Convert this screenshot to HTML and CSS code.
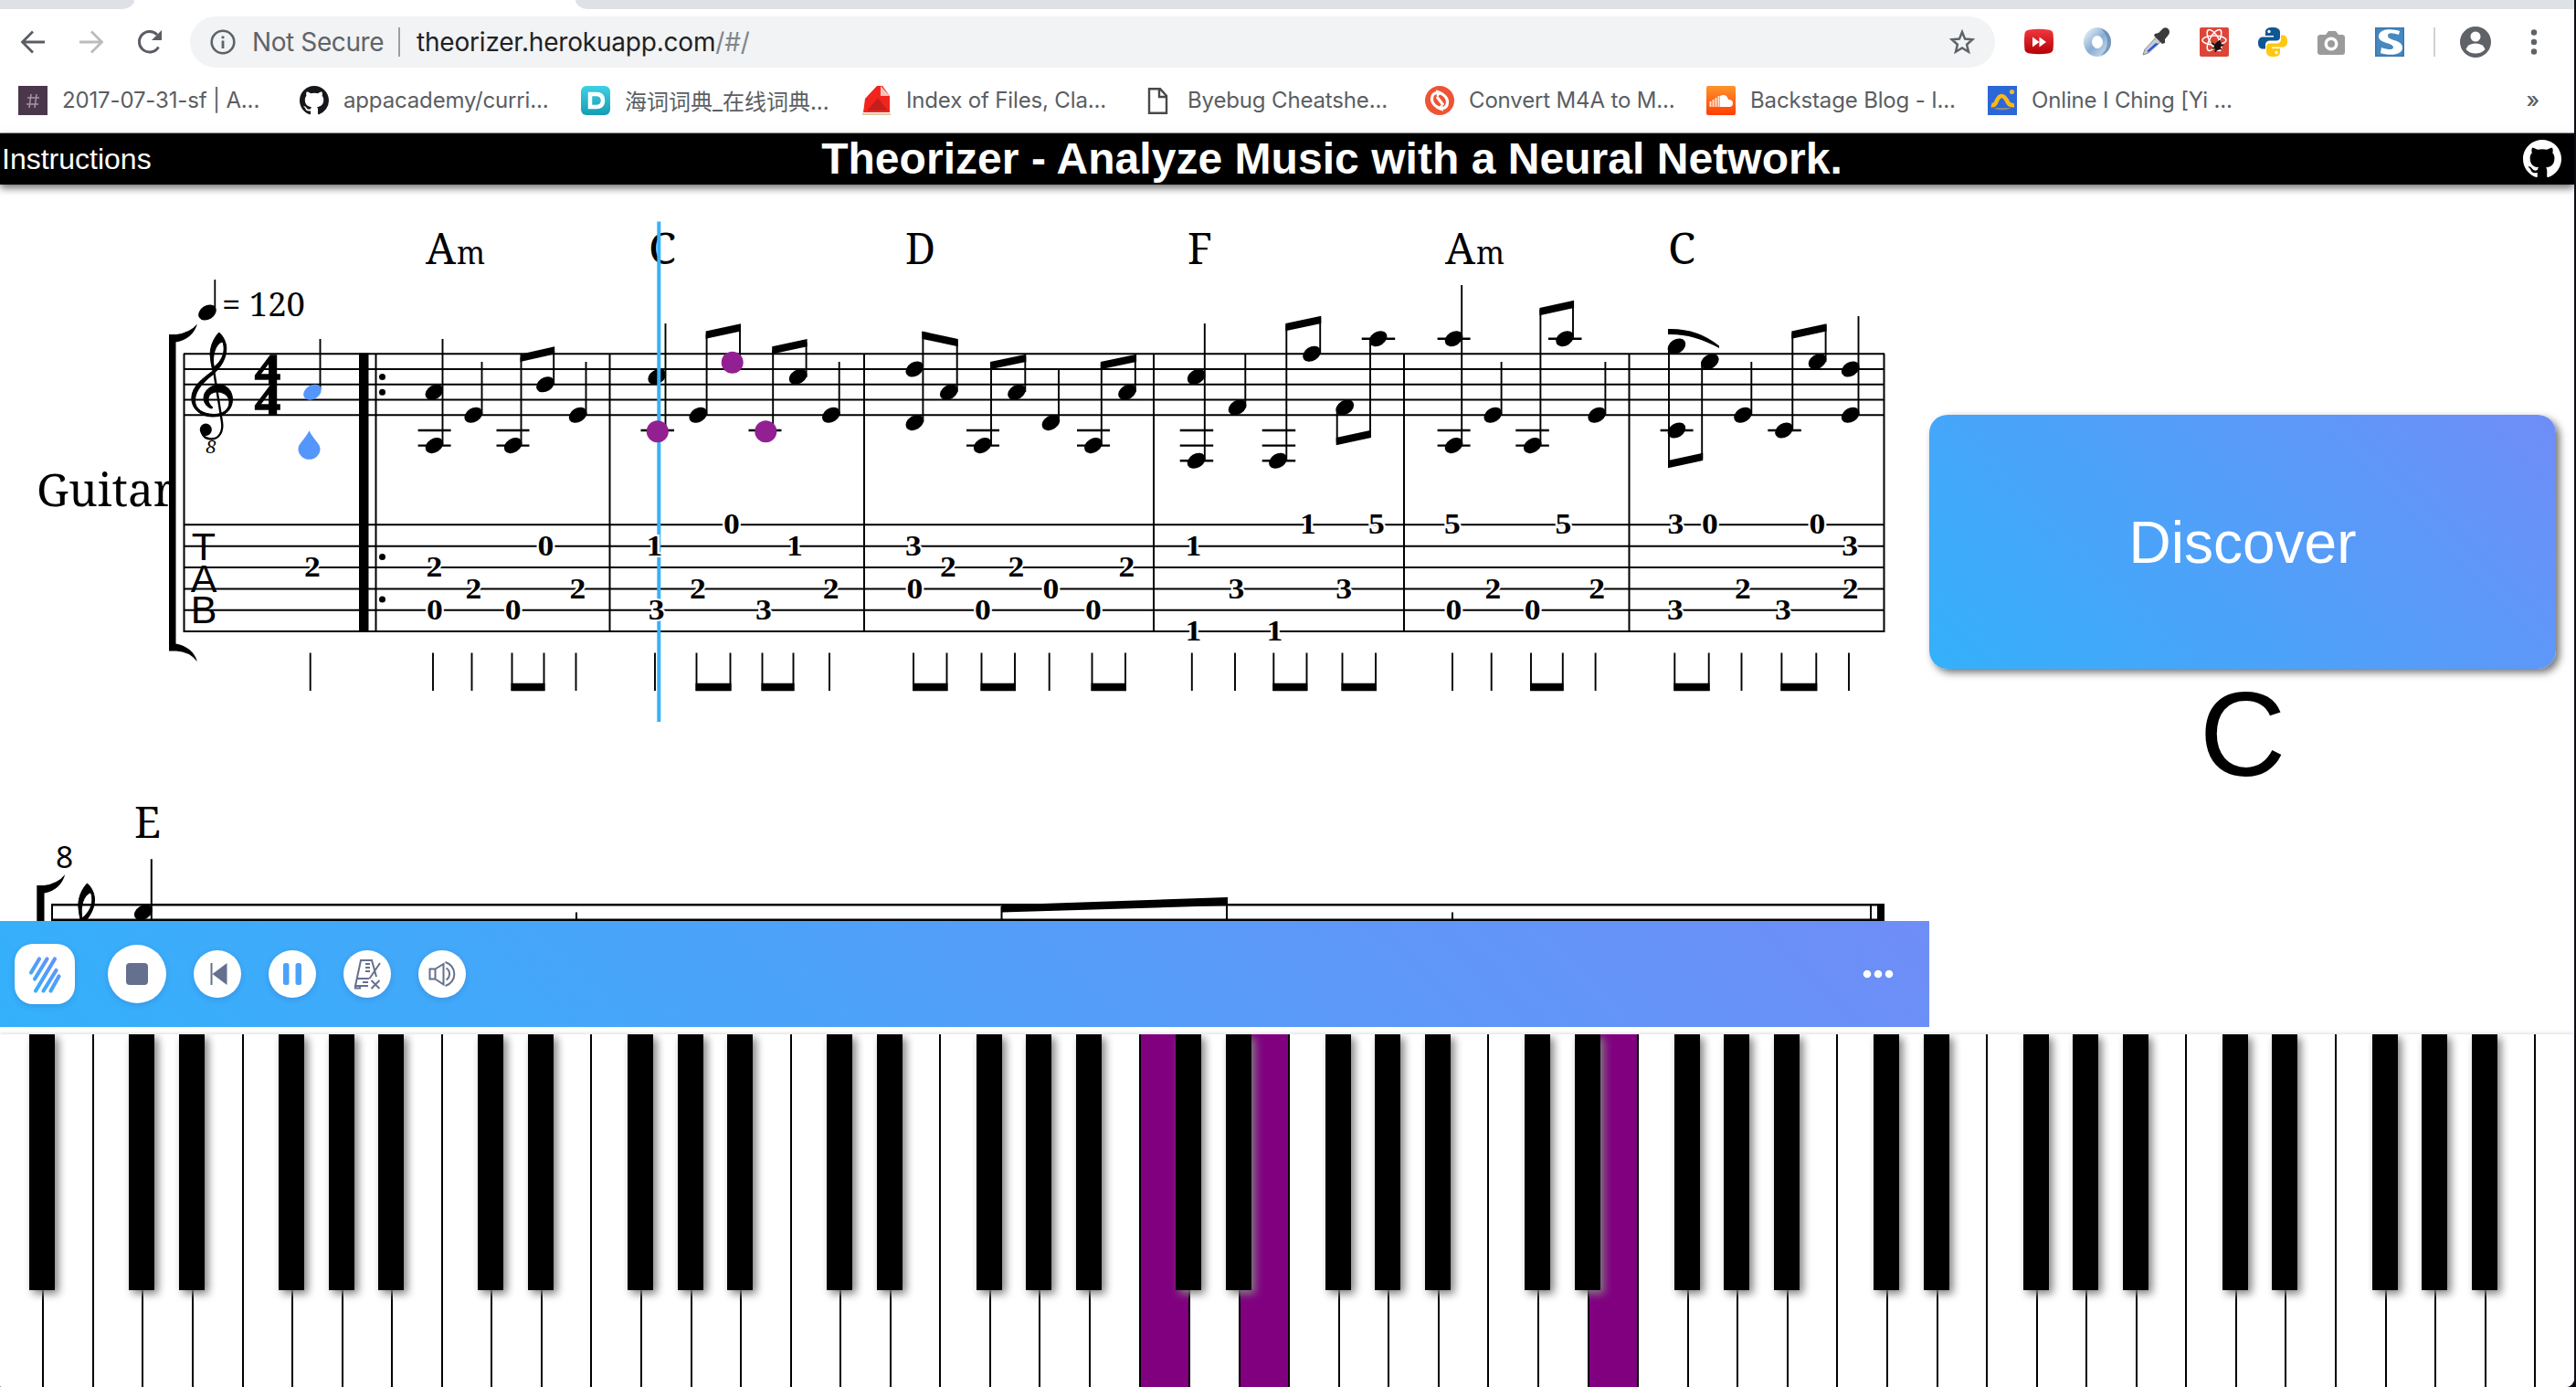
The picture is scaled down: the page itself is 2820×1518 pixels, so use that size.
FILE: index.html
```html
<!DOCTYPE html>
<html lang="en">
<head>
<meta charset="utf-8">
<title>Theorizer</title>
<link rel="stylesheet" href="styles.css">
</head>
<body>
<svg class="defs" aria-hidden="true">
  <defs>
    <symbol id="github" viewBox="0 0 16 16"><path d="M8 0C3.58 0 0 3.58 0 8c0 3.54 2.29 6.53 5.47 7.59.4.07.55-.17.55-.38 0-.19-.01-.82-.01-1.49-2.01.37-2.53-.49-2.69-.94-.09-.23-.48-.94-.82-1.13-.28-.15-.68-.52-.01-.53.63-.01 1.08.58 1.23.82.72 1.21 1.87.87 2.33.66.07-.52.28-.87.51-1.07-1.78-.2-3.64-.89-3.64-3.95 0-.87.31-1.59.82-2.15-.08-.2-.36-1.02.08-2.12 0 0 .67-.21 2.2.82.64-.18 1.32-.27 2-.27s1.36.09 2 .27c1.53-1.04 2.2-.82 2.2-.82.44 1.1.16 1.92.08 2.12.51.56.82 1.27.82 2.15 0 3.07-1.87 3.75-3.65 3.95.29.25.54.73.54 1.48 0 1.07-.01 1.93-.01 2.2 0 .21.15.46.55.38A8.01 8.01 0 0 0 16 8c0-4.42-3.58-8-8-8z"/></symbol>
  </defs>
</svg>
<div class="window">
  <div class="tabs"><span class="tab-left"></span><span class="tab-right"></span></div>
  <div class="toolbar">
    <nav class="nav">
      <svg viewBox="0 0 28 28"><path d="M27 14H3M14 2.500 2.500 14 14 25.500" fill="none" stroke="#5a5e63" stroke-width="2.800"/></svg>
      <svg viewBox="0 0 28 28"><path d="M1 14h24M14 2.500 25.500 14 14 25.500" fill="none" stroke="#babcbe" stroke-width="2.800"/></svg>
      <svg viewBox="0 0 28 28"><path d="M23.500 19.500A11.300 11.300 0 1 1 22 6" fill="none" stroke="#5a5e63" stroke-width="3"/><path d="M27 1v11H16z" fill="#5a5e63"/></svg>
    </nav>
    <div class="omnibox">
      <svg class="info" viewBox="0 0 28 28"><circle cx="14" cy="14" r="12.300" fill="none" stroke="#5f6368" stroke-width="2.600"/><path d="M12.600 12.500h2.800V21h-2.800zM12.600 7.500h2.800v2.800h-2.800z" fill="#5f6368"/></svg>
      <span class="insecure">Not Secure</span>
      <span class="url">theorizer.herokuapp.com<span class="path">/#/</span></span>
      <svg class="star" viewBox="0 0 28 28"><path d="m14 3 3.100 7.600 8.200.7-6.200 5.400 1.900 8L14 20.400l-7 4.300 1.900-8-6.200-5.400 8.200-.7z" fill="none" stroke="#5f6368" stroke-width="2.500"/></svg>
    </div>
    <div class="extensions">
      <svg viewBox="0 0 32 32"><defs><linearGradient id="rd" x2="0" y2="1"><stop stop-color="#f0383d"/><stop offset="1" stop-color="#b50008"/></linearGradient></defs><path d="M6 2.500q10-1.500 20 0 5 .5 5.500 4 1 8.500 0 18-.5 3-5.500 4-10 1.500-20 0-5-.8-5.500-4-1-9 0-18 .5-3.500 5.500-4z" fill="url(#rd)"/><path d="m9 10.500 7.500 5.500L9 21.500zm7.500 0L24 16l-7.500 5.500z" fill="#fff"/></svg>
      <svg viewBox="0 0 32 32"><defs><linearGradient id="rg" x2="1" y2="1"><stop stop-color="#d9e5f2"/><stop offset=".5" stop-color="#88add3"/><stop offset="1" stop-color="#c7d9eb"/></linearGradient></defs><ellipse cx="16" cy="16" rx="10.500" ry="11.500" fill="none" stroke="url(#rg)" stroke-width="9"/><path d="M20 1.500a15 15 0 0 1 0 29q7-6 7-14.500T20 1.500z" fill="#5c82ad" opacity=".7"/></svg>
      <svg viewBox="0 0 32 32"><path d="M2 30 4 24 18 9l5 5L8 28z" fill="#c8ccd2" stroke="#888" stroke-width="1"/><path d="m6 26 10-9 3 1L8 27z" fill="#2c55e0"/><path d="m15 7 4-1 5-5q4-2 6 1t0 6l-4 5 0 4-3 1-9-9z" fill="#3b3b3d"/></svg>
      <svg viewBox="0 0 32 32"><rect width="32" height="32" rx="2" fill="#dc4638"/><g fill="none" stroke="#fff" stroke-width="1.500"><ellipse cx="16" cy="14" rx="13" ry="5"/><ellipse cx="16" cy="14" rx="13" ry="5" transform="rotate(60 16 14)"/><ellipse cx="16" cy="14" rx="13" ry="5" transform="rotate(120 16 14)"/></g><ellipse cx="20" cy="20" rx="3.500" ry="5.500" transform="rotate(25 20 20)" fill="#1c1010"/><path d="m13 17 11 7M14 23l12-4M17 27l5-13" stroke="#1c1010" stroke-width="1.800"/></svg>
      <svg viewBox="0 0 32 32"><path d="M16 0c-6 0-8 2-8 5v4h9v1.500H5C2 10.500 0 13 0 17s2 6.500 5 6.500h3V19c0-3 2-4.500 5-4.500h7c3 0 4-2 4-4V5c0-3-3-5-8-5z" fill="#0d5794"/><path d="M16 32c6 0 8-2 8-5v-4h-9v-1.500h12c3 0 5-2.500 5-6.500s-2-6.500-5-6.500h-2V13c0 3-2 4.500-5 4.500h-7c-3 0-4 2-4 4V27c0 3 3 5 7 5z" fill="#ffc80f"/><circle cx="12" cy="4.500" r="1.700" fill="#fff"/><circle cx="20" cy="27.500" r="1.700" fill="#fff"/></svg>
      <svg viewBox="0 0 32 32"><path d="M4 8h6l3-4h8l3 4h4q3 0 3 3v16q0 3-3 3H4q-3 0-3-3V11q0-3 3-3z" fill="#9b9b9b"/><circle cx="16" cy="18" r="7.500" fill="#fff"/><circle cx="16" cy="18" r="4" fill="#9b9b9b"/></svg>
      <svg viewBox="0 0 32 32"><rect width="32" height="32" fill="#3a76ad"/><rect x="1.500" y="1.500" width="29" height="29" fill="#4589c0"/><path d="M27 4 26 8Q14 4 14 9c0 6 17 4 16 14-1 8-16 8-24 5l1-6q12 4 13 0C20 16 3 18 4 9 5 1 19 1 27 4z" fill="#fff"/></svg>
    </div>
    <span class="divider"></span>
    <svg class="avatar" viewBox="0 0 34 34"><circle cx="17" cy="17" r="17" fill="#5f6368"/><circle cx="17" cy="11" r="5.500" fill="#fff"/><path d="M6.500 25q2-6.500 10.500-6.500T27.500 25Q23.500 29.500 17 29.500T6.500 25z" fill="#fff"/></svg>
    <svg class="more" viewBox="0 0 8 28"><g fill="#5f6368"><circle cx="4" cy="3.500" r="3.200"/><circle cx="4" cy="14" r="3.200"/><circle cx="4" cy="24.500" r="3.200"/></g></svg>
  </div>
  <div class="bookmarks">
    <a><svg viewBox="0 0 32 32"><rect width="32" height="32" fill="#4b374b"/><path d="m14 9-2 15M20 9l-2 15M10 13h13M9 20h13" stroke="#a595a5" stroke-width="1.500"/></svg><span>2017-07-31-sf | A...</span></a>
    <a><svg class="ink"><use href="#github"/></svg><span>appacademy/curri...</span></a>
    <a><svg viewBox="0 0 32 32"><defs><linearGradient id="dc" x2="0" y2="1"><stop stop-color="#3fd0e4"/><stop offset="1" stop-color="#149db3"/></linearGradient></defs><rect width="32" height="32" rx="6" fill="url(#dc)"/><path d="M10 9h6.500q7.500 0 7.500 7t-7.500 7H10z" fill="none" stroke="#fff" stroke-width="4.500"/></svg><span class="cjk">海词词典_在线词典...</span></a>
    <a><svg viewBox="0 0 32 32"><path d="M1 29 3 14 16 0h6l8 11v18z" fill="#f3241e"/><path d="M5 27 17 13l11 14z" fill="#c4201b"/><path d="m20 0 10 11H20z" fill="#f9c5bd"/><path d="M0 30h31v2H0z" fill="#d9cda5"/></svg><span>Index of Files, Cla...</span></a>
    <a><svg viewBox="0 0 32 32"><path d="M6 3.200h12L25 11v18.800H6zM17 3v9h8" fill="none" stroke="#47494c" stroke-width="2.400"/></svg><span>Byebug Cheatshe...</span></a>
    <a><svg viewBox="0 0 32 32"><circle cx="16" cy="16" r="16" fill="#ee5434"/><g fill="none" stroke="#fff" stroke-width="3.200"><path d="M18 25.500 13 23Q7 19 7.500 13.500T13 7.500"/><path d="M14 6.500 19 9q6 4 5.500 9.500T19 24.500"/></g><path d="m12 4 6 4-5 4.500zM20 28l-6-4 5-4.500z" fill="#fff"/><path d="m13 12 7 9" stroke="#fff" stroke-width="3"/></svg><span>Convert M4A to M...</span></a>
    <a><svg viewBox="0 0 32 32"><defs><linearGradient id="sc" x2="0" y2="1"><stop stop-color="#fd942c"/><stop offset="1" stop-color="#ff3d05"/></linearGradient></defs><rect width="32" height="32" rx="2" fill="url(#sc)"/><path d="M15 23V11q7-3 9 4 5 0 5 4t-4 4z" fill="#fff"/><path d="M4.500 17v6M7.500 15v8M10.500 13v10M13.500 11v12" stroke="#ffe3d0" stroke-width="2"/></svg><span>Backstage Blog - I...</span></a>
    <a><svg viewBox="0 0 32 32"><rect width="32" height="32" fill="#2c67d8"/><path d="M4 21q4 1 6-5 5-10 11 0 2 6 8 5" fill="none" stroke="#fdb813" stroke-width="4.500"/><path d="M6 24h20q-10 5-20 0z" fill="#8a8d88"/><circle cx="26.500" cy="6.500" r="2.600" fill="#e8b640"/></svg><span>Online I Ching [Yi ...</span></a>
    <b class="overflow">»</b>
  </div>
  <header class="header">
    <a class="instructions">Instructions</a>
    <h1>Theorizer - Analyze Music with a Neural Network.</h1>
    <svg class="gh"><use href="#github"/></svg>
  </header>
  <main class="main">
    <section class="score">
      <svg class="sheet" viewBox="0 202 2112 806">
        <defs>
          <ellipse id="h" rx="10.600" ry="7.600" transform="rotate(-32)"/>
          <g id="clef"><path stroke="#000" stroke-width="1" fill-rule="evenodd" d="M239.700 364C232 372 229 384 230.500 392c.5 6 1.500 10 2.500 14C222 414 209.800 423 209.800 436c0 12 10.200 20 23.200 20 14 0 21.500-8 21.500-19 0-10-7.500-16.500-14.800-16-9.700.5-16.700 7-16.700 15 0 5 4 10 8.500 11l1.500-1c-3.500-3-5-6-5-8.500 0-6.500 6-9 11-8.500 6.500.5 12 5 12 11 0 9-8 13.500-17 13.500-12-.5-20.500-5.500-20.500-15.500C213.500 427 224 417 233 410c10-9 15-19 14.800-29-.3-8-4.800-14.500-8.100-17zm3.300 10c-7 3-11 14-9 28 8-6 12-15 11-23-.3-3-1-4.500-2-5z"/><path d="M232.500 396 243 462c1.500 10-3 18.500-11.500 18.500-5 0-9-2.500-10.500-7" fill="none" stroke="#000" stroke-width="2.400"/><ellipse cx="225.300" cy="470.300" rx="6.500" ry="6.800"/></g>
        </defs>

        <!-- system lines and barlines -->
        <g fill="none" stroke="#000" stroke-width="2">
          <path d="M201 387.300H2063M201 404H2063M201 420.800H2063M201 437.600H2063M201 454.300H2063M201 574.300H2063M201 597.700H2063M201 621H2063M201 644.400H2063M201 667.800H2063M201 691H2063"/>
          <path d="M201.500 387V692M411.500 387V692M667.500 387V692M946 387V692M1263 387V692M1537 387V692M1783.500 387V692M2062.500 387V692"/>
        </g>
        <path d="M393 386.500h10.500V692H393z"/>
        <g><circle cx="418.500" cy="412.500" r="3.500"/><circle cx="418.500" cy="429.300" r="3.500"/><circle cx="418.500" cy="609.400" r="3.500"/><circle cx="418.500" cy="656" r="3.500"/></g>
        <text class="serif" x="40" y="553.500" font-size="49" textLength="151" lengthAdjust="spacingAndGlyphs">Guitar</text>
        <path d="M185 366h8q15-2 23-11.500-5 16.500-23.500 20V704.500Q211 708 216 724q-9-11-23-11.500h-8z"/>
        <use href="#clef"/>
        <text class="serif it" x="231" y="496" font-size="20" text-anchor="middle">8</text>
        <use href="#h" x="227" y="342"/><path d="M235.300 306v35" stroke="#000" stroke-width="1.800"/>
        <text class="serif" x="243" y="346" font-size="37" textLength="91" lengthAdjust="spacingAndGlyphs">= 120</text>
        <g class="time"><text x="279" y="420.500" textLength="28" lengthAdjust="spacingAndGlyphs">4</text><text x="279" y="454" textLength="28" lengthAdjust="spacingAndGlyphs">4</text></g>
        <g class="tab-clef"><text x="223" y="613">T</text><text x="223" y="647.500">A</text><text x="223" y="682">B</text></g>

        <!-- chord names -->
        <g class="serif chord">
          <text x="466" y="288.600" textLength="33" lengthAdjust="spacingAndGlyphs">A</text><text class="minor" x="500" y="288.600" textLength="31" lengthAdjust="spacingAndGlyphs">m</text>
          <text x="710" y="288.600" textLength="30" lengthAdjust="spacingAndGlyphs">C</text>
          <text x="991" y="288.600" textLength="33" lengthAdjust="spacingAndGlyphs">D</text>
          <text x="1300" y="288.600" textLength="27" lengthAdjust="spacingAndGlyphs">F</text>
          <text x="1582" y="288.600" textLength="33" lengthAdjust="spacingAndGlyphs">A</text><text class="minor" x="1616" y="288.600" textLength="31" lengthAdjust="spacingAndGlyphs">m</text>
          <text x="1826" y="288.600" textLength="30" lengthAdjust="spacingAndGlyphs">C</text>
          <text x="147" y="917" textLength="29" lengthAdjust="spacingAndGlyphs">E</text>
        </g>

        <!-- note stems -->
        <path fill="none" stroke="#000" stroke-width="1.900" d="M350.500 371v55M484.500 371v116M527.500 396v58M570.500 391v96M606.200 384v37M641.500 396v58M728.500 354v112M773.600 366v88M810 358v38M846.200 383v86M882.600 375v38M918.700 396v58M1010.400 363v99M1047.700 372v57M1085 398v90M1122.300 390v39M1159 405v57M1205.800 398v90M1242.800 390v39M1318.800 354v150M1363.300 388v58M1408.300 356v148M1445.200 348v39M1463.700 446v38M1500 371v107M1600.200 312v176M1643.600 396v58M1686.400 339v149M1722 331v40M1757.400 396v58M1827 379v130M1863.200 396v106M1917.300 396v58M1962.300 365v106M1998.600 356v40M2034.500 346v108"/>
        <!-- beams -->
        <path d="M569.500 387.800 607.200 379.300v8.300l-37.700 8.300zM772.600 362.500 811 354.200v8.300l-38.400 8.300zM845.200 379.300 883.600 371v8.300l-38.400 8.300zM1009.400 362.500l39.300 8.400v8.300l-39.300-8.300zM1084 396l39.300-8.300v8.300L1084 404.300zM1204.800 396l39.300-8.300v8.300l-39.300 8.300zM1407.300 354l39-8.300v8.300l-39 8.300zM1462.700 479l38.300-8.300v8.300l-38.300 8.300zM1685.400 337l37.700-8.300v8.300l-37.700 8.300zM1826 504l38.200-8.300v8.300l-38.200 8.300zM1961.300 362.500l38.300-8.300v8.300l-38.300 8.300z"/>
        <path d="M1826 360q32-1 56 18.500v2.500q-29-16-56-15z"/>
        <!-- ledger lines -->
        <path fill="none" stroke="#000" stroke-width="2.400" d="M457.600 471h36M457.600 487.600h36M543.500 471h36M543.500 487.600h36M701.500 471h36.500M819.500 471h36M1058 471h36M1058 487.600h36M1179 471h36M1179 487.600h36M1291.700 471h36.500M1291.700 487.600h36.500M1291.700 504.300h36.500M1381.700 471h36.500M1381.700 487.600h36.500M1381.700 504.300h36.500M1490.700 370.700h36.500M1573.600 370.700h36M1573.600 471h36M1573.600 487.600h36M1659.300 471h36.500M1659.300 487.600h36.500M1695 370.700h36.500M1817.600 471h36M1935.300 471h36.500"/>
        <!-- note heads -->
        <g>
          <use href="#h" x="342" y="429.200" fill="#5596fc"/>
          <use href="#h" x="475.400" y="429.200"/><use href="#h" x="475.400" y="487.600"/><use href="#h" x="518.300" y="454.300"/><use href="#h" x="561.600" y="487.600"/><use href="#h" x="597" y="420.800"/><use href="#h" x="632.600" y="454.300"/>
          <use href="#h" x="719.200" y="412.400"/><use href="#h" x="764.300" y="454.300"/><use href="#h" x="873.600" y="412.400"/><use href="#h" x="909.800" y="454.300"/>
          <use href="#h" x="1001.300" y="404"/><use href="#h" x="1001.300" y="462.600"/><use href="#h" x="1038.800" y="429.200"/><use href="#h" x="1075.600" y="487.600"/><use href="#h" x="1113" y="429.200"/><use href="#h" x="1150.400" y="462.600"/><use href="#h" x="1196.800" y="487.600"/><use href="#h" x="1234" y="429.200"/>
          <use href="#h" x="1309.600" y="412.400"/><use href="#h" x="1309.600" y="504.300"/><use href="#h" x="1354.600" y="445.900"/><use href="#h" x="1399" y="504.300"/><use href="#h" x="1436" y="387.300"/><use href="#h" x="1472.300" y="445.900"/><use href="#h" x="1508.600" y="370.700"/>
          <use href="#h" x="1591.500" y="370.700"/><use href="#h" x="1591.500" y="487.600"/><use href="#h" x="1634.300" y="454.300"/><use href="#h" x="1677.700" y="487.600"/><use href="#h" x="1713" y="370.700"/><use href="#h" x="1748.200" y="454.300"/>
          <use href="#h" x="1835.500" y="379"/><use href="#h" x="1835.500" y="471"/><use href="#h" x="1871.800" y="395.700"/><use href="#h" x="1908" y="454.300"/><use href="#h" x="1953" y="471"/><use href="#h" x="1989.500" y="395.700"/><use href="#h" x="2025.700" y="404"/><use href="#h" x="2025.700" y="454.300"/>
        </g>
        <path d="M338.500 471.300c4 9 12 14 12 20a12 11.500 0 0 1-24 0c0-6 8-11 12-20z" fill="#5596fc"/>

        <!-- rhythm stems under the tablature -->
        <path fill="none" stroke="#000" stroke-width="1.900" d="M339.700 714.500V756M474 714.500V756M516.500 714.500V756M560.500 714.500V756M595.500 714.500V756M630.500 714.500V756M717 714.500V756M762.500 714.500V756M799.500 714.500V756M834.500 714.500V756M868.500 714.500V756M908 714.500V756M1000 714.500V756M1036.500 714.500V756M1074.500 714.500V756M1111 714.500V756M1148.700 714.500V756M1195.500 714.500V756M1232 714.500V756M1304.800 714.500V756M1352 714.500V756M1394.300 714.500V756M1430.500 714.500V756M1469.500 714.500V756M1506 714.500V756M1590 714.500V756M1632.700 714.500V756M1676 714.500V756M1710.800 714.500V756M1746.600 714.500V756M1833.300 714.500V756M1870.700 714.500V756M1906.500 714.500V756M1950.400 714.500V756M1988.300 714.500V756M2024 714.500V756"/>
        <path fill="none" stroke="#000" stroke-width="8.400" d="M559.500 752h37M761.500 752h39M833.500 752h36M999 752h38.500M1073.500 752h38.500M1194.500 752h38.500M1393.300 752h38M1468.500 752h38.500M1675 752h36.500M1832.300 752h39.300M1949.400 752h39.900"/>

        <!-- playback cursor -->
        <path d="M721.300 242.500V790" stroke="#38b1f8" stroke-width="4"/>
        <g fill="#932092"><circle cx="719.800" cy="472.300" r="12"/><circle cx="801.700" cy="396.700" r="12"/><circle cx="838.300" cy="472.300" r="12"/></g>

        <!-- fret numbers -->
        <g class="frets">
          <text x="801" y="584.500">0</text><text x="1432" y="584.500">1</text><text x="1507" y="584.500">5</text><text x="1590" y="584.500">5</text><text x="1711.300" y="584.500">5</text><text x="1834.400" y="584.500">3</text><text x="1871.800" y="584.500">0</text><text x="1989.500" y="584.500">0</text>
          <text x="597.400" y="608">0</text><text x="716.500" y="608">1</text><text x="870" y="608">1</text><text x="1000" y="608">3</text><text x="1306.400" y="608">1</text><text x="2025.200" y="608">3</text>
          <text x="342" y="631.300">2</text><text x="475.300" y="631.300">2</text><text x="1038" y="631.300">2</text><text x="1112.500" y="631.300">2</text><text x="1233.500" y="631.300">2</text>
          <text x="518.300" y="654.600">2</text><text x="632.300" y="654.600">2</text><text x="763.800" y="654.600">2</text><text x="909.800" y="654.600">2</text><text x="1001.300" y="654.600">0</text><text x="1150.400" y="654.600">0</text><text x="1353.500" y="654.600">3</text><text x="1471.200" y="654.600">3</text><text x="1634.300" y="654.600">2</text><text x="1748.200" y="654.600">2</text><text x="1908" y="654.600">2</text><text x="2025.700" y="654.600">2</text>
          <text x="476" y="678">0</text><text x="561.600" y="678">0</text><text x="718.700" y="678">3</text><text x="836" y="678">3</text><text x="1075.900" y="678">0</text><text x="1196.800" y="678">0</text><text x="1591.500" y="678">0</text><text x="1677.700" y="678">0</text><text x="1833.800" y="678">3</text><text x="1952" y="678">3</text>
          <text x="1306.400" y="701.300">1</text><text x="1395.300" y="701.300">1</text>
        </g>

        <!-- second system, partly behind the player -->
        <text class="sans" x="61" y="950" font-size="33.500">8</text>
        <path d="M40.300 969h8q15-2 23-12-5 17-22.800 20.500V1008h-8.200z"/>
        <use href="#clef" x="-144.300" y="603"/>
        <path fill="none" stroke="#000" stroke-width="2.600" d="M56 990.300H2063M56 1006.900H2063"/>
        <path fill="none" stroke="#000" stroke-width="2" d="M57 990V1008M165.800 940.300V1008M631 998.500V1008M1590 998.500V1008M1096.500 992V1008M1343 986V1008M2048 990V1008"/>
        <path d="M1096.500 990.500 1344 982v9l-247.500 7.500zM2055 989h8v19h-8z"/>
        <use href="#h" x="156.800" y="998.600"/>
      </svg>
      <div class="player">
        <button class="btn logo"><svg viewBox="0 0 66 66"><defs><linearGradient id="lg" gradientUnits="userSpaceOnUse" x1="18" y1="52" x2="50" y2="14"><stop stop-color="#35b0fb"/><stop offset="1" stop-color="#6f8df8"/></linearGradient></defs><path d="M27 16.500 18 31.500M35.500 16.500 22 38.500M44 16.500 23 51.500M45.500 29 31.500 51.500M48.500 35.500 39.500 51.500" fill="none" stroke="url(#lg)" stroke-width="4.200" stroke-linecap="round"/></svg></button>
        <button class="btn stop"><svg viewBox="0 0 64 64"><rect x="20" y="20" width="24" height="24" rx="4" fill="#65708f"/></svg></button>
        <button class="btn"><svg viewBox="0 0 52 52"><path d="M18.500 14h2v24h-2zM20.500 26 36.500 14v24z" fill="#65708f"/></svg></button>
        <button class="btn"><svg viewBox="0 0 52 52"><rect x="16" y="14" width="6.500" height="24" rx="2.500" fill="#4ba2fa"/><rect x="29.500" y="14" width="6.500" height="24" rx="2.500" fill="#4ba2fa"/></svg></button>
        <button class="btn"><svg viewBox="0 0 52 52"><g fill="none" stroke="#65708f" stroke-width="2"><path d="M27 39H13l6-28h12l5 18M15 31h13M40 14 28.500 31M13 39v2.500h5V39"/><path d="M24 15h5M24 19h5M24 23h5M21 35h6M30.500 33l9 9M39.500 33l-9 9"/></g></svg></button>
        <button class="btn"><svg viewBox="0 0 52 52"><path d="M12.500 20.500h6v11h-6zM18.500 20.500 27.500 15v22.500l-9-6M30.500 19.500a7 7.500 0 0 1 0 13M29.500 13a13.500 13.500 0 0 1 0 26" fill="none" stroke="#65708f" stroke-width="2"/></svg></button>
        <svg class="dots" viewBox="0 0 34 10"><g fill="#fff"><circle cx="5" cy="5" r="4.300"/><circle cx="17" cy="5" r="4.300"/><circle cx="29" cy="5" r="4.300"/></g></svg>
      </div>
    </section>
    <aside class="side">
      <button class="discover">Discover</button>
      <div class="result">C</div>
    </aside>
  </main>
  <div class="piano">
    <div class="keys">
      <i class="s"></i><i></i>
      <i class="s"></i><i class="s"></i><i></i><i class="s"></i><i class="s"></i><i class="s"></i><i></i>
      <i class="s"></i><i class="s"></i><i></i><i class="s"></i><i class="s"></i><i class="s"></i><i></i>
      <i class="s"></i><i class="s"></i><i></i><i class="s"></i><i class="s"></i><i class="s"></i><i></i>
      <i class="s on"></i><i class="s"></i><i class="on"></i><i class="s"></i><i class="s"></i><i class="s"></i><i></i>
      <i class="s"></i><i class="s"></i><i class="on"></i><i class="s"></i><i class="s"></i><i class="s"></i><i></i>
      <i class="s"></i><i class="s"></i><i></i><i class="s"></i><i class="s"></i><i class="s"></i><i></i>
      <i class="s"></i><i class="s"></i><i></i><i class="s"></i><i class="s"></i><i class="s"></i><i></i>
      <i></i>
    </div>
  </div>
</div>
</body>
</html>
```
FILE: styles.css
```css
* { box-sizing: border-box; }
body { margin: 0; background: #0c0e16; overflow: hidden; font-family: "Liberation Sans", Arial, sans-serif; }
button { border: 0; padding: 0; font: inherit; }
.defs { display: none; }
.window { width: 2818px; height: 1518px; background: #fff; overflow: hidden; border-radius: 0 0 9px 2px; display: flex; flex-direction: column; }

.tabs { height: 10px; display: flex; justify-content: space-between; flex: none; }
.tabs span { background: #dee1e6; }
.tab-left { width: 147px; border-bottom-right-radius: 14px 10px; }
.tab-right { width: 2188px; border-bottom-left-radius: 14px 10px; }

.toolbar { height: 74px; flex: none; display: flex; align-items: center; padding: 0 40px 2px 22px; font-family: Inter, "Noto Sans", sans-serif; }
.nav { display: flex; gap: 36px; width: 186px; }
.nav svg, .info, .star { width: 28px; height: 28px; flex: none; }
.omnibox { width: 1976px; height: 56px; border-radius: 28px; background: #f1f3f4; display: flex; align-items: center; padding: 0 22px; font-size: 28px; }
.insecure { margin-left: 18px; width: 162px; color: #5f6368; border-right: 2px solid #9b9ea2; line-height: 32px; letter-spacing: -.4px; white-space: nowrap; }
.url { margin-left: 18px; color: #202124; letter-spacing: -.2px; }
.path { color: #80868b; }
.star { margin-left: auto; }
.extensions { display: flex; gap: 32px; margin-left: 32px; }
.extensions svg { width: 32px; height: 32px; }
.divider { width: 2px; height: 32px; background: #cfd1d4; margin-left: 32px; }
.avatar { width: 34px; height: 34px; margin-left: 27px; }
.more { width: 8px; height: 28px; margin-left: auto; }

.bookmarks { height: 62px; flex: none; display: grid; grid-template-columns: repeat(8, 308px) auto; padding: 0 38px 10px 20px; align-items: center; border-bottom: 1px solid #a5aba6; font: 24px Inter, "Noto Sans CJK SC", sans-serif; letter-spacing: -.15px; color: #5a5e63; }
.bookmarks a { display: flex; align-items: center; gap: 16px; white-space: nowrap; }
.bookmarks svg { width: 32px; height: 32px; flex: none; }
.cjk { letter-spacing: 0; }
.ink { fill: #15171a; }
.overflow { text-align: right; font-weight: 500; }

.header { height: 56px; flex: none; background: #000; color: #fff; display: grid; grid-template-columns: 1fr auto 1fr; align-items: center; padding: 0 14px 0 2px; box-shadow: 0 4px 8px rgba(0,0,0,.55); position: relative; }
.instructions { font-size: 32px; }
.header h1 { margin: 0 0 0 110px; font-size: 48px; line-height: 54px; letter-spacing: .04px; white-space: nowrap; }
.gh { width: 42px; height: 42px; fill: #fff; justify-self: end; }

.main { height: 922px; flex: none; display: flex; }
.score { width: 2112px; height: 922px; }
.sheet { display: block; width: 2112px; height: 806px; }
.serif { font-family: "Noto Serif", "DejaVu Serif", serif; }
.sans { font-family: "Noto Sans", sans-serif; }
.it { font-style: italic; }
.chord { font-size: 46.500px; }
.minor { font-size: 35px; }
.time { font: bold 49px "Liberation Serif", serif; stroke: #000; stroke-width: 1.600px; }
.tab-clef { font: 43px "Liberation Sans", sans-serif; text-anchor: middle; }
.frets { font: bold 31px "Liberation Serif", serif; text-anchor: middle; paint-order: stroke; stroke: #fff; stroke-width: 4px; }
.frets text { transform: scaleX(1.15); transform-box: fill-box; transform-origin: center; }

.player { height: 116px; background: linear-gradient(45deg, #34b1fb, #6f8df7); display: flex; align-items: center; gap: 30px; padding: 0 39px 0 16px; }
.btn { width: 52px; height: 52px; border-radius: 50%; background: #fff; box-shadow: 0 2px 6px rgba(40,70,140,.22); }
.btn svg { display: block; width: 100%; height: 100%; }
.logo { width: 66px; height: 66px; border-radius: 20px; margin-right: 6px; }
.stop { width: 64px; height: 64px; }
.dots { width: 34px; height: 10px; margin-left: auto; }

.side { width: 706px; padding: 252px 20px 0 0; text-align: center; }
.discover { display: block; width: 686px; height: 278px; padding-top: 2px; border-radius: 20px; color: #fff; font-size: 64px; background: linear-gradient(45deg, #34b1fb, #6f8df7); box-shadow: 4px 4px 8px rgba(0,0,0,.55); }
.result { font-size: 131px; line-height: 143px; }

.piano { margin-top: 8px; height: 386px; overflow: hidden; border: 0; flex: none; box-shadow: 0 -1px 4px rgba(0,0,0,.14); }
.keys { width: 2837.100px; height: 386px; margin-left: -6.300px; display: grid; grid-template-columns: repeat(52, 1fr); }
.keys i { position: relative; border-right: 2px solid #000; background: #fff; }
.keys .on { background: #800080; }
.keys .s::after { content: ""; position: absolute; z-index: 1; top: 0; right: -14px; width: 28px; height: 280px; background: #000; box-shadow: 4px 4px 10px gray; }
```
